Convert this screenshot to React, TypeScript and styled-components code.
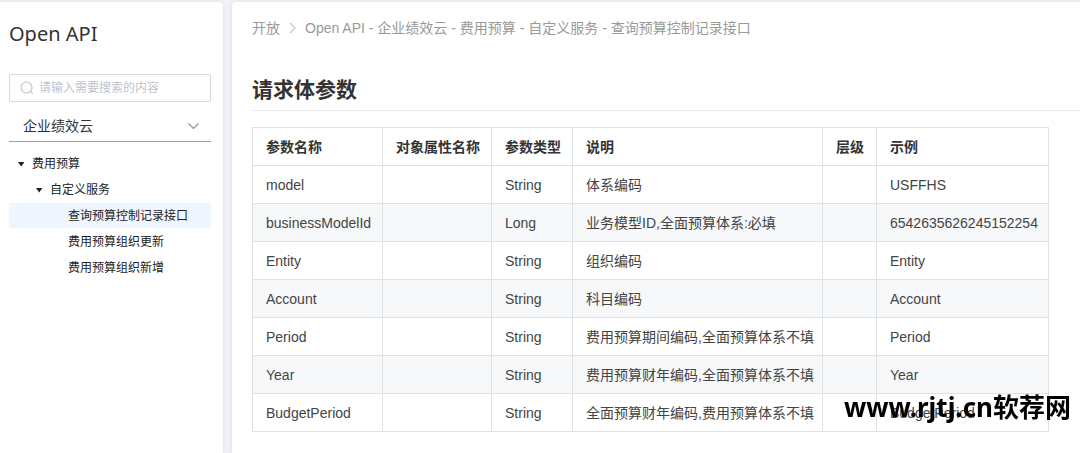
import React from 'react';
import styled, { createGlobalStyle } from 'styled-components';

const GlobalStyle = createGlobalStyle`
  * { box-sizing: border-box; }
  body {
    margin: 0;
    background: #f1f2f7;
    color: #333;
    font: 14px/20px "Liberation Sans", "Noto Sans CJK SC", sans-serif;
  }
`;

const Page = styled.div`
  display: flex;
  gap: 9px;
  min-height: 100vh;
  padding-top: 2px;
`;

const Sidebar = styled.aside`
  flex: 0 0 223px;
  padding: 18px 12px 0 9px;
  background: #fff;
  border-radius: 0 4px 0 0;
  box-shadow: 0 0 4px rgba(40, 50, 90, 0.1);
`;

const Brand = styled.h1`
  margin: 0 0 26px;
  font: 400 20px/28px "Noto Sans", sans-serif;
  color: #333;
`;

const SearchBox = styled.label`
  display: flex;
  align-items: center;
  gap: 5px;
  height: 28px;
  padding: 0 10px;
  border: 1px solid #d9dbdf;
  border-radius: 1px;
`;

const SearchInput = styled.input`
  flex: 1;
  min-width: 0;
  padding: 0;
  border: 0;
  outline: 0;
  background: transparent;
  font: 12px/20px "Liberation Sans", "Noto Sans CJK SC", sans-serif;
  color: #333;
  &::placeholder { color: #c0c4cc; opacity: 1; }
`;

const ProductPicker = styled.div`
  display: grid;
  align-items: center;
  height: 40px;
  padding-top: 8px;
  border-bottom: 1px solid #a3a3a3;
  margin-bottom: 9px;
  & > * { grid-area: 1 / 1; }
  & > svg { justify-self: end; margin-right: 11px; pointer-events: none; }
`;

const ProductSelect = styled.select`
  appearance: none;
  width: 100%;
  height: 30px;
  padding: 0 28px 0 14px;
  border: 0;
  outline: 0;
  background: transparent;
  font: inherit;
  color: #333;
`;

const TreeList = styled.ul`
  margin: 0;
  padding: 0;
  list-style: none;
`;

const TreeItem = styled.button<{ $level: number; $active?: boolean }>`
  display: flex;
  align-items: center;
  gap: 7px;
  width: 100%;
  height: 25px;
  margin-bottom: 1px;
  padding: 0 0 0 ${(p) => 8 + p.$level * 18}px;
  border: 0;
  background: ${(p) => (p.$active ? '#eff6ff' : 'transparent')};
  font: 12px/20px "Liberation Sans", "Noto Sans CJK SC", sans-serif;
  color: #222;
  text-align: left;
`;

const CaretSlot = styled.span`
  display: flex;
  flex: 0 0 8px;
`;

const Main = styled.main`
  flex: 1;
  min-width: 0;
  padding: 16px 0 20px 20px;
  background: #fff;
  border-radius: 4px 0 0 0;
  box-shadow: 0 0 4px rgba(40, 50, 90, 0.1);
`;

const Breadcrumb = styled.nav`
  display: flex;
  align-items: center;
  gap: 8px;
  color: #999;
  white-space: nowrap;
`;

const CrumbLink = styled.a`
  color: inherit;
  text-decoration: none;
`;

const SectionTitle = styled.h2`
  margin: 37px 0 16px;
  padding-bottom: 5px;
  border-bottom: 1px solid #eaecef;
  font-size: 21px;
  line-height: 30px;
  font-weight: 700;
`;

const ParamTable = styled.table`
  width: 797px;
  table-layout: fixed;
  border-collapse: collapse;
  white-space: nowrap;
`;

const HeadCell = styled.th`
  height: 38px;
  padding: 0 8px 0 13px;
  border: 1px solid #dfe2e5;
  text-align: left;
  font-weight: 700;
`;

const Row = styled.tr`
  &:nth-child(even) { background: #f6f8fa; }
`;

const Cell = styled.td`
  height: 38px;
  padding: 0 8px 0 13px;
  border: 1px solid #dfe2e5;
  color: #444;
`;

const Watermark = styled.div`
  position: fixed;
  right: 9px;
  bottom: 28px;
  font: 700 26px/36px "Noto Sans", "Noto Sans CJK SC", sans-serif;
  color: #000;
  white-space: nowrap;
  pointer-events: none;
`;

const columns = [
  { name: '参数名称', width: 130 },
  { name: '对象属性名称', width: 109 },
  { name: '参数类型', width: 81 },
  { name: '说明', width: 250 },
  { name: '层级', width: 54 },
  { name: '示例', width: 172 },
];

const params = [
  ['model', '', 'String', '体系编码', '', 'USFFHS'],
  ['businessModelId', '', 'Long', '业务模型ID,全面预算体系:必填', '', '6542635626245152254'],
  ['Entity', '', 'String', '组织编码', '', 'Entity'],
  ['Account', '', 'String', '科目编码', '', 'Account'],
  ['Period', '', 'String', '费用预算期间编码,全面预算体系不填', '', 'Period'],
  ['Year', '', 'String', '费用预算财年编码,全面预算体系不填', '', 'Year'],
  ['BudgetPeriod', '', 'String', '全面预算财年编码,费用预算体系不填', '', 'BudgetPeriod'],
];

const tree = [
  { label: '费用预算', level: 0, open: true },
  { label: '自定义服务', level: 1, open: true },
  { label: '查询预算控制记录接口', level: 2, active: true },
  { label: '费用预算组织更新', level: 2 },
  { label: '费用预算组织新增', level: 2 },
];

const Caret = () => (
  <svg width="8" height="6" viewBox="0 0 8 6" aria-hidden="true">
    <path d="M1 1h6.4L4.2 5.4z" fill="#222" />
  </svg>
);

export default function App() {
  return (
    <>
      <GlobalStyle />
      <Page>
        <Sidebar>
          <Brand>Open API</Brand>
          <SearchBox>
            <svg width="14" height="14" viewBox="0 0 14 14" fill="none" stroke="#c0c4cc" strokeWidth="1.2" aria-hidden="true">
              <circle cx="6.5" cy="6.5" r="5.5" />
              <path d="M10.5 10.5l2.2 2.2" />
            </svg>
            <SearchInput type="text" aria-label="搜索" placeholder="请输入需要搜索的内容" />
          </SearchBox>
          <ProductPicker>
            <ProductSelect aria-label="产品">
              <option>企业绩效云</option>
            </ProductSelect>
            <svg width="13" height="8" viewBox="0 0 13 8" fill="none" stroke="#909399" strokeWidth="1.2" aria-hidden="true">
              <path d="M1.5 1.5l5 5 5-5" />
            </svg>
          </ProductPicker>
          <TreeList>
            {tree.map((node) => (
              <li key={node.label}>
                <TreeItem type="button" $level={node.level} $active={node.active}>
                  <CaretSlot>{node.open && <Caret />}</CaretSlot>
                  {node.label}
                </TreeItem>
              </li>
            ))}
          </TreeList>
        </Sidebar>
        <Main>
          <Breadcrumb>
            <CrumbLink href="#open">开放</CrumbLink>
            <svg width="9" height="12" viewBox="0 0 9 12" fill="none" stroke="#c0c4cc" strokeWidth="1.2" aria-hidden="true">
              <path d="M2 1l5 5-5 5" />
            </svg>
            <span>Open API - 企业绩效云 - 费用预算 - 自定义服务 - 查询预算控制记录接口</span>
          </Breadcrumb>
          <SectionTitle>请求体参数</SectionTitle>
          <ParamTable>
            <colgroup>
              {columns.map((c) => (
                <col key={c.name} style={{ width: c.width }} />
              ))}
            </colgroup>
            <thead>
              <tr>
                {columns.map((c) => (
                  <HeadCell key={c.name} scope="col">{c.name}</HeadCell>
                ))}
              </tr>
            </thead>
            <tbody>
              {params.map((row) => (
                <Row key={row[0]}>
                  {row.map((value, i) => (
                    <Cell key={columns[i].name}>{value}</Cell>
                  ))}
                </Row>
              ))}
            </tbody>
          </ParamTable>
        </Main>
      </Page>
      <Watermark>www.rjtj.cn软荐网</Watermark>
    </>
  );
}
